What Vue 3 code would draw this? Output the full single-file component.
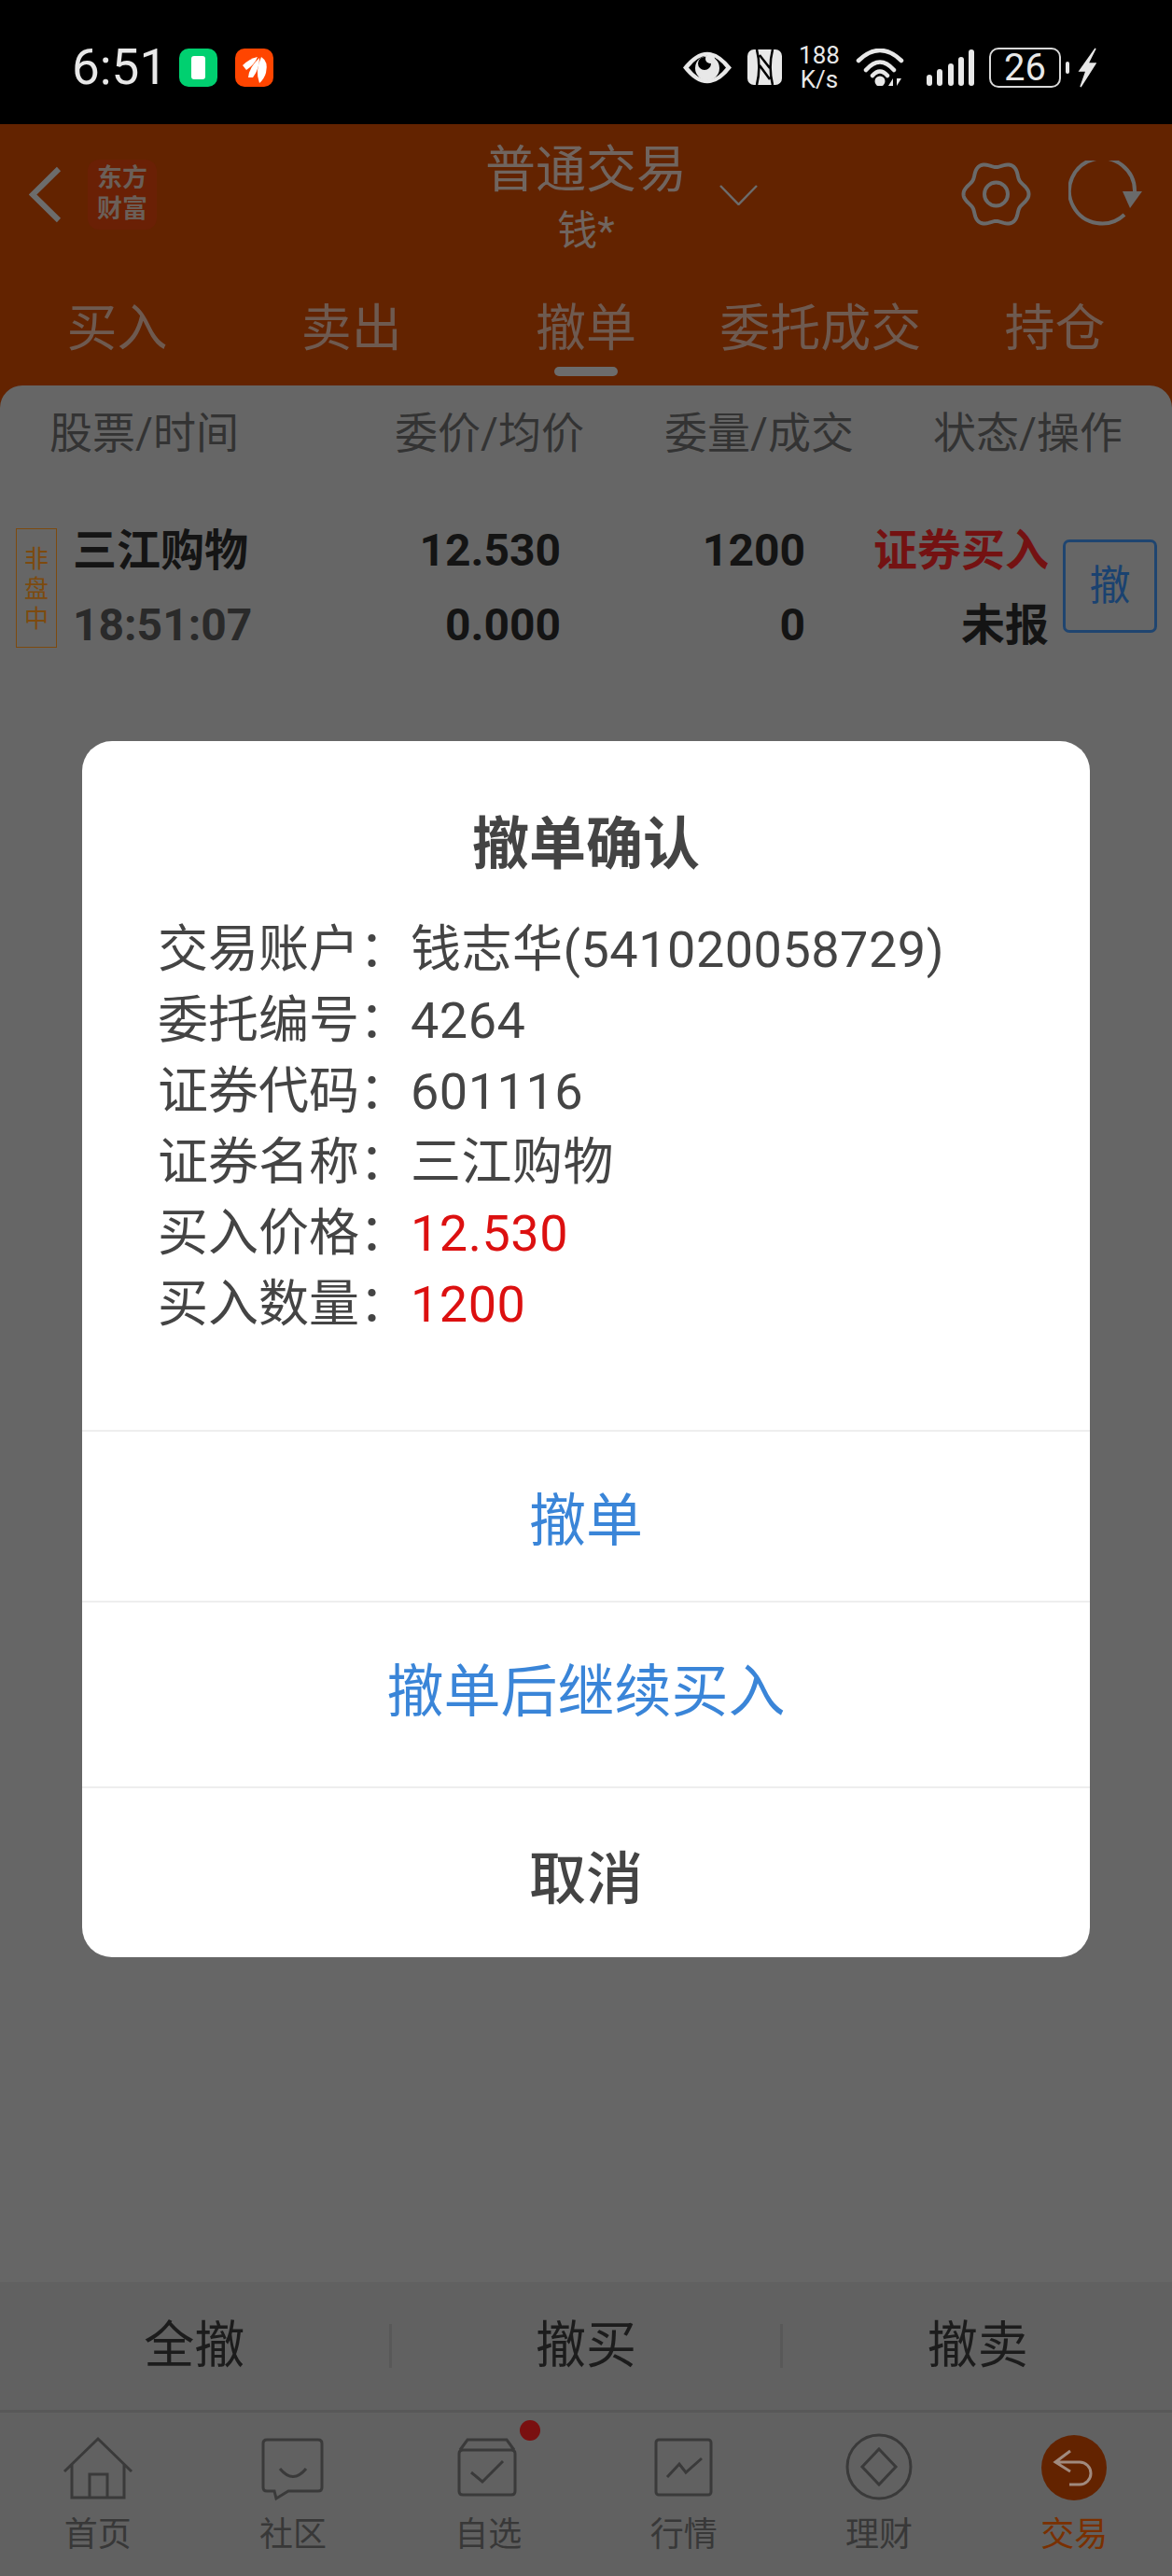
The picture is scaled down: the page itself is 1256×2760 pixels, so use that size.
<script setup>
import { computed } from 'vue';

const tabs = ['买入', '卖出', '撤单', '委托成交', '持仓'];
const columns = ['股票/时间', '委价/均价', '委量/成交', '状态/操作'];
const actions = ['全撤', '撤买', '撤卖'];
const navs = [
  { key: 'home', label: '首页' },
  { key: 'chat', label: '社区' },
  { key: 'watch', label: '自选', dot: true },
  { key: 'market', label: '行情' },
  { key: 'wealth', label: '理财' },
  { key: 'trade', label: '交易', active: true },
];
const details = [
  { label: '交易账户：', value: '钱志华(541020058729)' },
  { label: '委托编号：', value: '4264' },
  { label: '证券代码：', value: '601116' },
  { label: '证券名称：', value: '三江购物' },
  { label: '买入价格：', value: '12.530', red: true },
  { label: '买入数量：', value: '1200', red: true },
];
const signalBars = [12, 18, 24, 31, 39];

// wavy outline of the settings gear, six lobes
const gearPath = computed(() => {
  const pts = [];
  for (let i = 0; i < 120; i++) {
    const a = (i / 120) * Math.PI * 2;
    const r = 32 + 3 * Math.cos(6 * a);
    pts.push(`${(37.5 + r * Math.cos(a)).toFixed(2)} ${(36 + r * Math.sin(a)).toFixed(2)}`);
  }
  return `M${pts.join('L')}Z`;
});
</script>

<template>
  <div class="page">
    <div class="status">
      <span class="clock">6:51</span>
      <span class="app-icon app-green"><i class="cell"></i></span>
      <span class="app-icon app-orange">
        <svg width="41" height="41" viewBox="0 0 41 41">
          <path d="M8 18Q15 11 24 9Q21 17 12 23Z" fill="#fff" />
          <path d="M14 31Q15 20 26 10Q26 22 19 31Z" fill="#fff" />
          <path d="M26 37Q21 24 28 9Q36 14 33 26Q31 33 26 37Z" fill="#fff" />
        </svg>
      </span>
      <div class="status-right">
        <svg class="ic-eye" width="54" height="37" viewBox="0 0 54 37">
          <path d="M1 18.5Q27 -15 53 18.5Q27 52 1 18.5Z" fill="#e8e8e8" />
          <path d="M7 18.5Q27 -7 47 18.5Q27 44 7 18.5Z" fill="#000" />
          <circle cx="27" cy="19" r="13" fill="#e8e8e8" />
          <circle cx="24" cy="14" r="7" fill="#000" />
          <circle cx="30" cy="9" r="5" fill="#e8e8e8" />
        </svg>
        <svg class="ic-nfc" width="37" height="38" viewBox="0 0 37 38">
          <rect width="37" height="38" rx="7" fill="#e8e8e8" />
          <path d="M10 0C13 12 13 26 10 38M27 0C24 12 24 26 27 38M13 6L24 20M13 17L24 32" fill="none" stroke="#000" stroke-width="2.5" />
        </svg>
        <div class="speed"><span>188</span><span>K/s</span></div>
        <svg class="ic-wifi" width="52" height="40" viewBox="0 0 52 40">
          <path d="M3 13Q26 -9 49 13M11 23Q26 6 41 23M18 29Q26 20 34 29" fill="none" stroke="#e8e8e8" stroke-width="4.5" stroke-linecap="round" />
          <circle cx="26" cy="35" r="5.5" fill="#e8e8e8" />
          <path d="M40 40V32L35 40ZM44 32V40L49 32Z" fill="#e8e8e8" />
        </svg>
        <div class="signal">
          <i v-for="h in signalBars" :key="h" :style="{ height: `${h}px` }"></i>
        </div>
        <div class="battery"><span>26</span></div>
        <i class="battery-nub"></i>
        <svg class="ic-bolt" width="20" height="43" viewBox="0 0 20 43">
          <path d="M19 1L2 25L9 25L3 42L19 17L11 17Z" fill="#e8e8e8" stroke="#e8e8e8" stroke-width="1.5" />
        </svg>
      </div>
    </div>

    <header class="header">
      <div class="topbar">
        <div class="top-left">
          <svg width="35" height="61" viewBox="0 0 35 61">
            <path d="M32 3L4 30.5L32 58" fill="none" stroke="#6c6c6c" stroke-width="6" />
          </svg>
          <div class="logo"><span>东方</span><span>财富</span></div>
        </div>
        <div class="title-block">
          <div class="title">普通交易</div>
          <div class="subtitle">钱*</div>
          <svg class="caret" width="41" height="22" viewBox="0 0 41 22">
            <path d="M1 1L20.5 21L40 1" fill="none" stroke="#6c6c6c" stroke-width="2.5" />
          </svg>
        </div>
        <div class="top-right">
          <svg width="75" height="72" viewBox="0 0 75 72">
            <path :d="gearPath" fill="none" stroke="#6a6a6a" stroke-width="4" />
            <circle cx="37.5" cy="36" r="12.5" fill="none" stroke="#6a6a6a" stroke-width="4" />
          </svg>
          <svg width="79" height="72" viewBox="0 0 79 72">
            <path d="M60 58A35 35 0 1 1 71 33" fill="none" stroke="#6a6a6a" stroke-width="4" />
            <path d="M58 33H79L66 51Z" fill="#6a6a6a" />
          </svg>
        </div>
      </div>
      <nav class="tabs">
        <div v-for="(tab, i) in tabs" :key="tab" class="tab">
          {{ tab }}
          <i v-if="i === 2" class="tab-line"></i>
        </div>
      </nav>
    </header>

    <main class="sheet">
      <div class="cols">
        <span v-for="col in columns" :key="col">{{ col }}</span>
      </div>
      <div class="order">
        <div class="tag">非<br />盘<br />中</div>
        <div class="cell-name">
          <div class="name">三江购物</div>
          <div class="time">18:51:07</div>
        </div>
        <div class="cell-num cell-price">
          <div>12.530</div>
          <div>0.000</div>
        </div>
        <div class="cell-num cell-qty">
          <div>1200</div>
          <div>0</div>
        </div>
        <div class="cell-num cell-state">
          <div class="buy">证券买入</div>
          <div>未报</div>
        </div>
        <div class="cancel-btn">撤</div>
      </div>

      <div class="actions">
        <div v-for="action in actions" :key="action" class="action">{{ action }}</div>
      </div>
      <footer class="nav">
        <div v-for="nav in navs" :key="nav.key" class="nav-item" :class="{ active: nav.active }">
          <svg width="76" height="76" viewBox="0 0 76 76" fill="none" stroke="#3a3a3a" stroke-width="3">
            <template v-if="nav.key === 'home'">
              <path d="M2 42L38 7L74 42M10 34V70H66V34M29 70V45H48V70" />
            </template>
            <template v-else-if="nav.key === 'chat'">
              <path d="M10 8H65Q69 8 69 12V59Q69 63 65 63H33L20 71L18 63H10Q6 63 6 59V12Q6 8 10 8Z" />
              <path d="M24 39Q38 56 52 39" />
            </template>
            <template v-else-if="nav.key === 'watch'">
              <path d="M11 19H63Q67 19 67 23V63Q67 67 63 67H11Q7 67 7 63V23Q7 19 11 19ZM8 19L16 8H58L66 19M20 43L32 53L54 31" />
            </template>
            <template v-else-if="nav.key === 'market'">
              <rect x="8" y="8" width="59" height="59" rx="3" />
              <path d="M20 48L33 34L40 43L57 28" />
            </template>
            <template v-else-if="nav.key === 'wealth'">
              <circle cx="38" cy="37" r="34" />
              <path d="M38 18L56 37L38 56L20 37Z" />
            </template>
            <template v-else>
              <circle cx="38" cy="38" r="35" fill="#632300" stroke="none" />
              <path d="M34 20L18 32L34 42M18 32H44A12 12 0 0 1 44 56H33" stroke="#a08a7e" />
            </template>
          </svg>
          <span class="nav-label">{{ nav.label }}</span>
          <i v-if="nav.dot" class="nav-dot"></i>
        </div>
      </footer>
    </main>

    <div class="dialog">
      <h2 class="dialog-title">撤单确认</h2>
      <div class="details">
        <div v-for="row in details" :key="row.label" class="detail">
          <span class="detail-label">{{ row.label }}</span>
          <span class="detail-value" :class="{ red: row.red }">{{ row.value }}</span>
        </div>
      </div>
      <div class="dialog-btn blue first">撤单</div>
      <div class="dialog-btn blue second">撤单后继续买入</div>
      <div class="dialog-btn last">取消</div>
    </div>
  </div>
</template>

<style>
body {
  margin: 0;
  background: #666;
}
</style>

<style scoped>
.page {
  position: relative;
  width: 1256px;
  height: 2760px;
  display: flex;
  flex-direction: column;
  overflow: hidden;
  font-family: Roboto, "Noto Sans CJK SC", sans-serif;
  background: #666;
}
.status {
  height: 133px;
  flex: none;
  box-sizing: border-box;
  padding: 11px 0 0 77px;
  display: flex;
  align-items: center;
  background: #000;
  color: #e8e8e8;
}
.clock {
  width: 95px;
  font-size: 53px;
  line-height: 60px;
  margin-right: 20px;
}
.app-icon {
  width: 41px;
  height: 41px;
  border-radius: 10px;
  margin-right: 19px;
  display: flex;
  align-items: center;
  justify-content: center;
}
.app-green {
  background: #00d070;
}
.app-orange {
  background: #ff4500;
}
.cell {
  width: 15px;
  height: 25px;
  background: #fff;
  border-radius: 3px;
}
.status-right {
  margin-left: auto;
  padding-right: 81px;
  display: flex;
  align-items: center;
}
.ic-nfc {
  margin-left: 16px;
}
.speed {
  margin-left: 18px;
  width: 44px;
  display: flex;
  flex-direction: column;
  font-size: 26px;
  line-height: 26px;
  text-align: center;
}
.ic-wifi {
  margin-left: 17px;
}
.signal {
  margin-left: 24px;
  width: 51px;
  height: 40px;
  display: flex;
  align-items: flex-end;
  justify-content: space-between;
}
.signal i {
  width: 6px;
  background: #e8e8e8;
  border-radius: 3px;
}
.battery {
  margin-left: 16px;
  width: 77px;
  height: 43px;
  box-sizing: border-box;
  border: 2px solid #d8d8d8;
  border-radius: 10px;
  display: flex;
  align-items: center;
  justify-content: center;
  font-size: 40px;
  line-height: 39px;
}
.battery-nub {
  margin-left: 5px;
  width: 4px;
  height: 13px;
  background: #e8e8e8;
  border-radius: 2px;
}
.ic-bolt {
  margin-left: 9px;
}
.header {
  height: 304px;
  flex: none;
  background: #632300;
}
.topbar {
  height: 150px;
  display: grid;
  grid-template-columns: 1fr auto 1fr;
  align-items: center;
}
.top-left {
  padding-left: 31px;
  display: flex;
  align-items: center;
  gap: 28px;
}
.logo {
  width: 74px;
  height: 75px;
  border-radius: 12px;
  background: #6a2005;
  display: flex;
  flex-direction: column;
  align-items: center;
  justify-content: center;
  color: #6b5f58;
  font-size: 27px;
  line-height: 33px;
  font-weight: 700;
}
.title-block {
  position: relative;
  width: 216px;
  padding-top: 9px;
  text-align: center;
  color: #70655f;
}
.title {
  font-size: 54px;
  line-height: 60px;
}
.subtitle {
  margin-top: 9px;
  font-size: 43px;
  line-height: 50px;
}
.caret {
  position: absolute;
  left: 251px;
  top: 54px;
}
.top-right {
  padding-right: 32px;
  display: flex;
  justify-content: flex-end;
  align-items: center;
  gap: 40px;
}
.tabs {
  display: flex;
  padding-top: 40px;
}
.tab {
  position: relative;
  flex: 1;
  text-align: center;
  font-size: 54px;
  line-height: 60px;
  color: #6e5a50;
}
.tab-line {
  position: absolute;
  left: 50%;
  top: 70px;
  width: 68px;
  height: 10px;
  margin-left: -34px;
  border-radius: 5px;
  background: #6c6c6c;
}
.sheet {
  flex: 1;
  margin-top: -24px;
  display: flex;
  flex-direction: column;
  background: #666;
  border-radius: 24px 24px 0 0;
}
.cols {
  margin-top: 21px;
  padding-left: 53px;
  display: grid;
  grid-template-columns: 370px 289px 288px auto;
  font-size: 46px;
  line-height: 60px;
  color: #333;
}
.order {
  margin-top: 56px;
  height: 160px;
  padding-left: 17px;
  display: grid;
  grid-template-columns: 61px 273px 250px 262px 261px 101px;
  align-items: center;
  font-size: 48px;
  font-weight: 700;
  line-height: 80px;
  color: #141414;
}
.tag {
  width: 44px;
  height: 128px;
  box-sizing: border-box;
  border: 1.5px solid #7d4a0e;
  padding-top: 16px;
  text-align: center;
  color: #7d4a0e;
  font-size: 26px;
  font-weight: 400;
  line-height: 32px;
}
.name {
  font-size: 47px;
}
.time {
  color: #2a2a2a;
}
.cell-num {
  text-align: right;
}
.buy {
  color: #741212;
}
.cell-state {
  font-size: 47px;
}
.cancel-btn {
  margin-left: 15px;
  width: 101px;
  height: 100px;
  box-sizing: border-box;
  margin-top: -4px;
  border: 3px solid #1f4570;
  border-radius: 7px;
  display: flex;
  align-items: center;
  justify-content: center;
  color: #1a4270;
  font-size: 44px;
  font-weight: 400;
}
.actions {
  margin-top: auto;
  height: 137px;
  flex: none;
  display: flex;
  align-items: center;
  background: #616161;
}
.action {
  flex: 1;
  text-align: center;
  font-size: 54px;
  line-height: 47px;
  color: #1c1c1c;
}
.action + .action {
  border-left: 3px solid #585858;
}
.nav {
  height: 178px;
  flex: none;
  box-sizing: border-box;
  display: flex;
  padding-top: 21px;
  border-top: 3px solid #585858;
  background: #616161;
}
.nav-item {
  position: relative;
  flex: 1;
  display: flex;
  flex-direction: column;
  align-items: center;
}
.nav-label {
  margin-top: 12px;
  font-size: 36px;
  line-height: 44px;
  color: #383838;
}
.nav-item.active .nav-label {
  color: #7a3000;
}
.nav-dot {
  position: absolute;
  left: calc(50% + 34px);
  top: -13px;
  width: 22px;
  height: 22px;
  border-radius: 50%;
  background: #7a1010;
}
.dialog {
  position: absolute;
  left: 88px;
  top: 794px;
  width: 1080px;
  height: 1303px;
  border-radius: 32px;
  background: #fff;
  overflow: hidden;
  color: #444;
}
.dialog-title {
  margin: 73px 0 0;
  text-align: center;
  font-size: 61px;
  line-height: 76px;
  font-weight: 700;
}
.details {
  margin-top: 37px;
  padding: 0 0 96px 81px;
  font-size: 54px;
  line-height: 76px;
}
.detail {
  display: flex;
}
.detail-label {
  width: 271px;
}
.detail-value {
  letter-spacing: 0.5px;
}
.red {
  color: #dc1010;
}
.dialog-btn {
  box-sizing: border-box;
  border-top: 2px solid #eee;
  display: flex;
  align-items: center;
  justify-content: center;
  font-size: 61px;
  font-weight: 500;
}
.dialog-btn.first {
  height: 183px;
}
.dialog-btn.second {
  height: 199px;
  padding-bottom: 16px;
}
.dialog-btn.last {
  height: 183px;
  padding-top: 4px;
}
.blue {
  color: #3a85d8;
  font-weight: 400;
}
</style>
